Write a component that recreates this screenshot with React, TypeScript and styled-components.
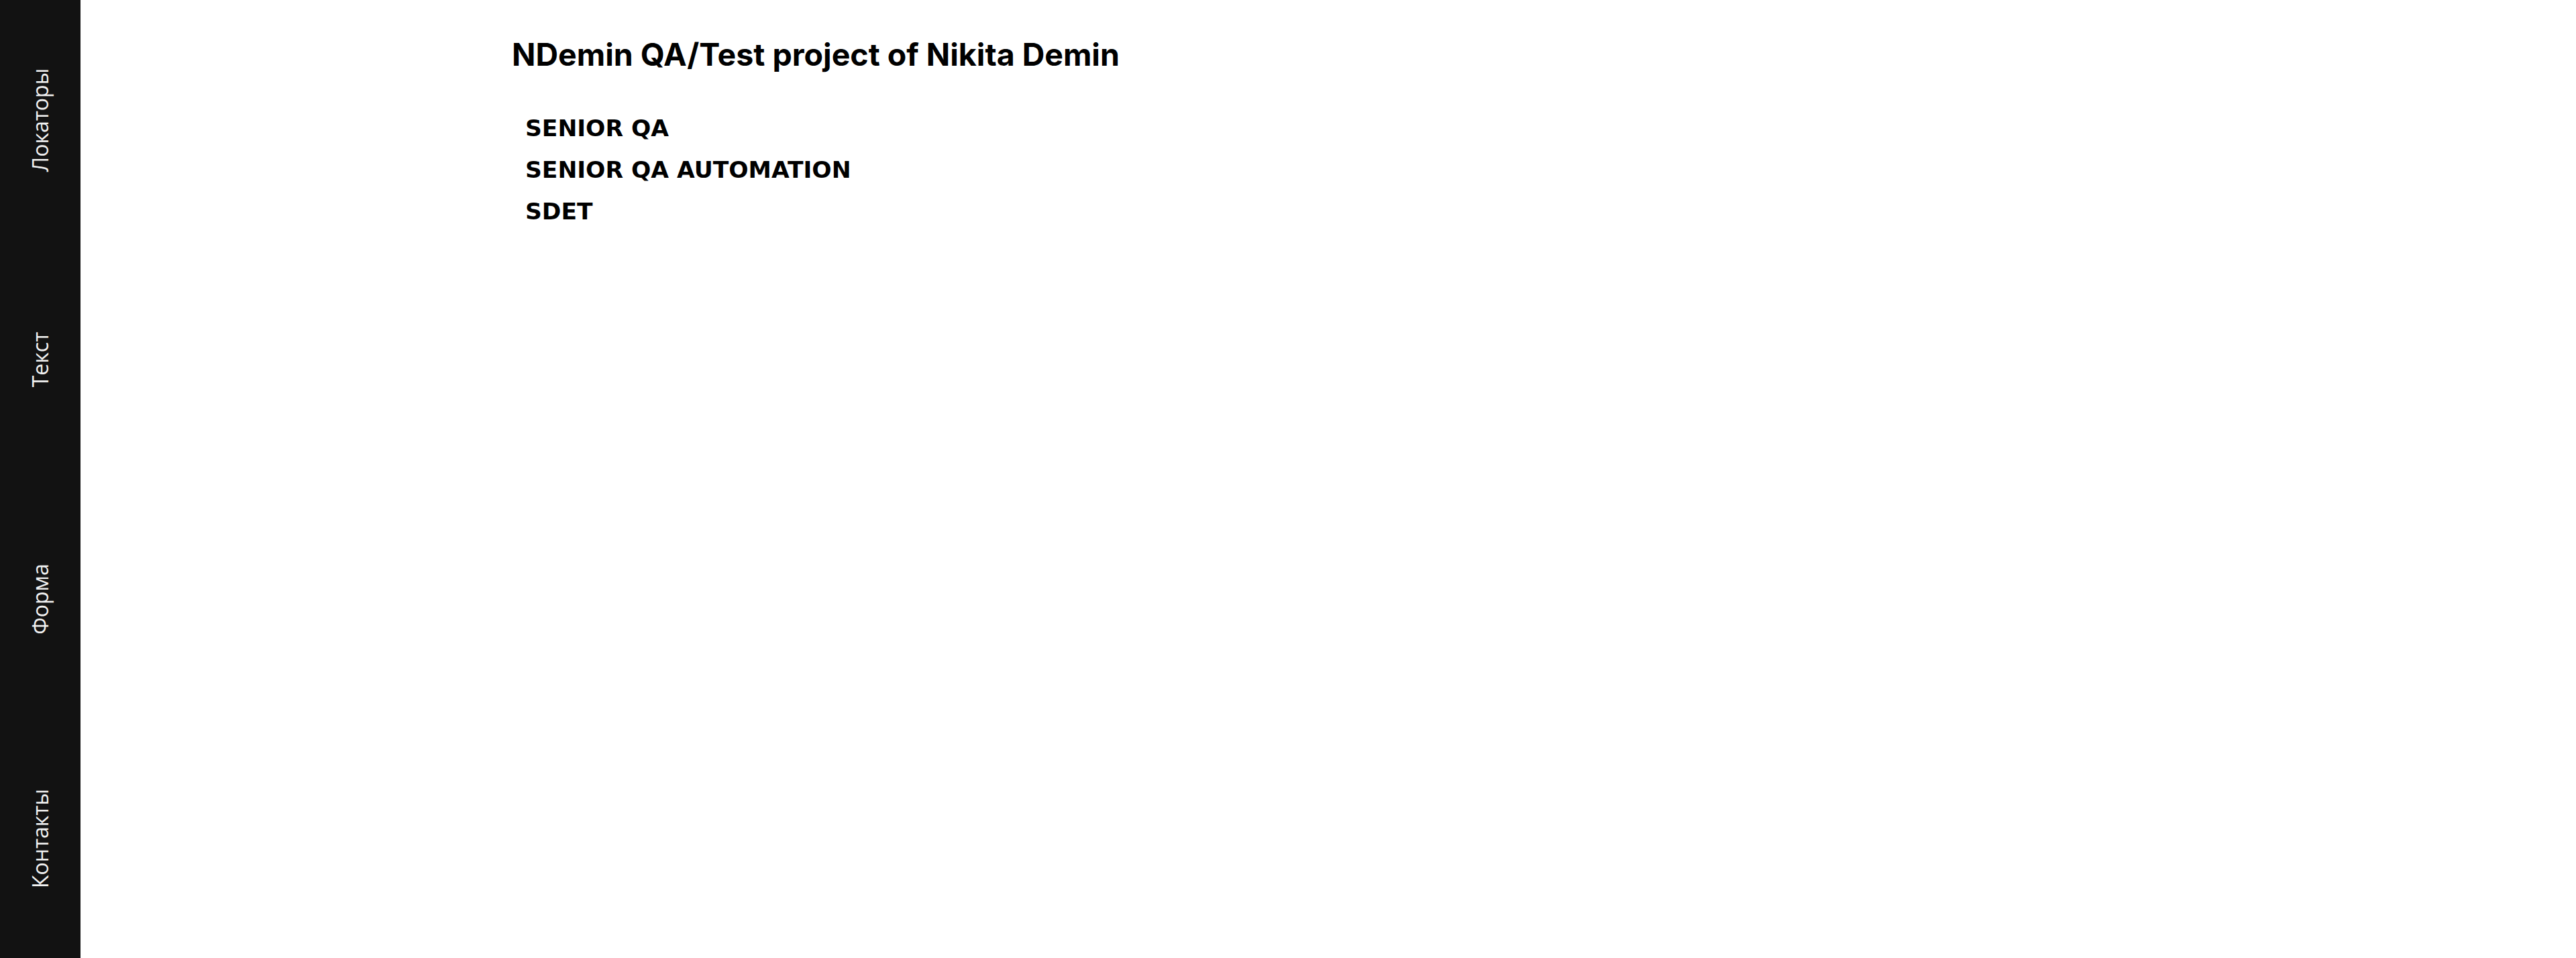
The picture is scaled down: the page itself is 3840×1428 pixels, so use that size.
import React from "react";
import styled, { createGlobalStyle } from "styled-components";

const GlobalStyle = createGlobalStyle`
  html, body {
    margin: 0;
    padding: 0;
    background: #ffffff;
  }
  #root {
    min-height: 1428px;
  }
`;

const Page = styled.div`
  display: flex;
  min-height: 1428px;
  background: #ffffff;
`;

const Sidebar = styled.nav`
  flex: 0 0 120px;
  width: 120px;
  height: 1428px;
  background: #121212;
  display: flex;
  flex-direction: column;
`;

const NavItem = styled.a`
  flex: 1;
  display: flex;
  align-items: center;
  justify-content: center;
  text-decoration: none;
  color: #ffffff;
  cursor: pointer;
`;

const NavLabel = styled.span`
  display: block;
  transform: rotate(-90deg);
  white-space: nowrap;
  font-family: "Open Sans", "Noto Sans", sans-serif;
  font-size: 32px;
  line-height: 1;
  color: #f2f2f2;
`;

const Main = styled.main`
  flex: 1;
  padding: 53px 0 0 643px;
  font-family: "Inter", "Roboto", "Liberation Sans", sans-serif;
  color: #000000;
`;

const Title = styled.h1`
  margin: 0;
  font-size: 46.5px;
  font-weight: 700;
  line-height: 56px;
`;

const RoleList = styled.ul`
  list-style: none;
  margin: 62px 0 0;
  padding: 0 0 0 20px;
  display: flex;
  flex-direction: column;
  gap: 22px;
`;

const Role = styled.li`
  font-family: "DejaVu Sans", "Inter", sans-serif;
  font-size: 34.5px;
  font-weight: 700;
  line-height: 40px;
`;

const navItems = ["Локаторы", "Текст", "Форма", "Контакты"];
const roles = ["SENIOR QA", "SENIOR QA AUTOMATION", "SDET"];

export default function App() {
  return (
    <>
      <GlobalStyle />
      <Page>
        <Sidebar>
          {navItems.map((item) => (
            <NavItem key={item}>
              <NavLabel>{item}</NavLabel>
            </NavItem>
          ))}
        </Sidebar>
        <Main>
          <Title>NDemin QA/Test project of Nikita Demin</Title>
          <RoleList>
            {roles.map((r) => (
              <Role key={r}>{r}</Role>
            ))}
          </RoleList>
        </Main>
      </Page>
    </>
  );
}
